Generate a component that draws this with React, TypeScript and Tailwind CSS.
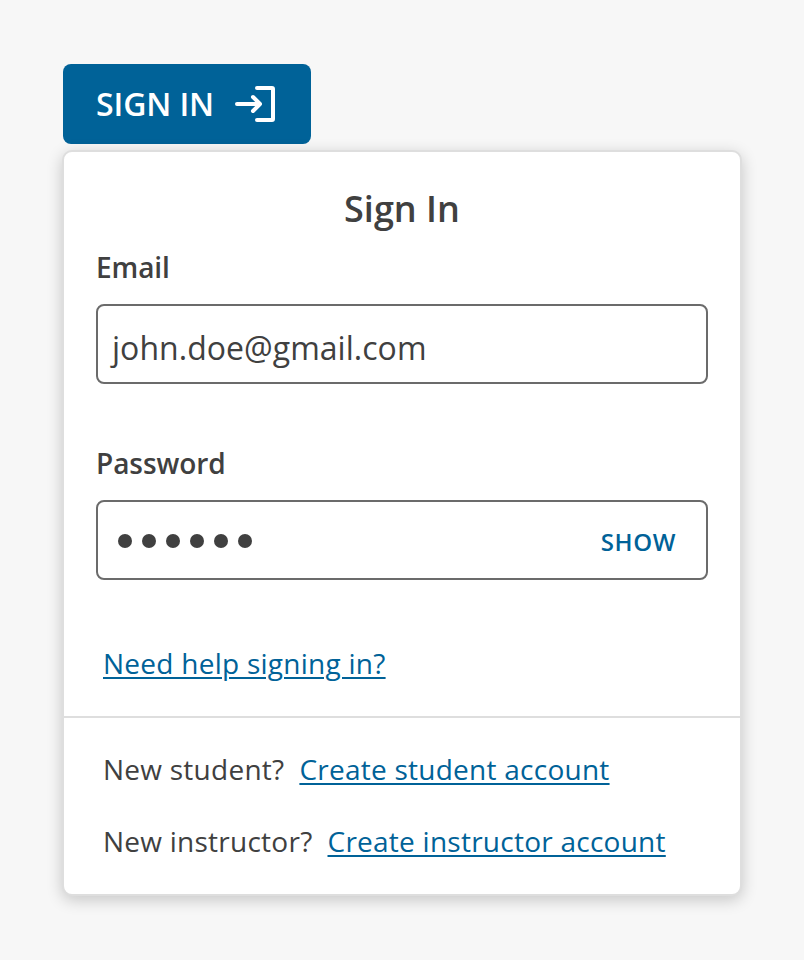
export default function App() {
  return (
    <main className="h-[960px] w-[804px] bg-[#f7f7f7] px-[62px] pt-16 font-['Open_Sans',sans-serif] text-[#404040]">
      <button className="ml-px flex h-20 w-[248px] items-center rounded-lg bg-[#006298] pl-[33px] text-[32px] font-semibold text-white">
        <span className="w-[138px] text-left tracking-[-0.1px] whitespace-nowrap">SIGN IN</span>
        <svg className="h-10 w-[42px]" viewBox="0 0 42 40" fill="none" stroke="currentColor" strokeWidth="4" strokeLinecap="round" strokeLinejoin="round">
          <path d="M23 4H38Q39 4 39 5V35Q39 36 38 36H23M3 20H26M19 13L26 20L19 27" />
        </svg>
      </button>
      <section className="mt-1.5 h-[746px] w-[680px] rounded-[10px] border-2 border-[#dedede] bg-white shadow-[0_4px_16px_rgba(0,0,0,0.2)]">
        <form className="h-[566px] border-b-2 border-[#dedede] px-8 pt-8">
          <h1 className="h-[50px] text-center text-[36px] leading-[50px] font-semibold">Sign In</h1>
          <label className="mt-[13px] block h-10 text-[28px] leading-10 font-semibold tracking-[-0.1px]">Email</label>
          <div className="mt-[17px] flex h-20 items-center rounded-lg border-2 border-[#6b6b6b] px-3.5 pt-2 text-[32px] tracking-[0.03px]">john.doe@gmail.com</div>
          <label className="mt-[59px] block h-10 text-[28px] leading-10 font-semibold tracking-[-0.05px]">Password</label>
          <div className="mt-[17px] flex h-20 items-center justify-between rounded-lg border-2 border-[#6b6b6b] pt-0.5 pr-[30px] pl-5">
            <div className="flex gap-2.5">{[0,1,2,3,4,5].map(n => <i key={n} className="size-3.5 rounded-full bg-[#404040]" />)}</div>
            <button className="pt-0.5 text-2xl font-semibold tracking-[0.6px] text-[#006298]">SHOW</button>
          </div>
          <a className="mt-[63px] ml-[7px] block text-[28px] leading-10 tracking-[0.26px] text-[#006298] underline decoration-2 underline-offset-[3px]">Need help signing in?</a>
        </form>
        <div className="pt-[31px] pl-[39px] text-[28px] leading-10 tracking-[0.25px]">
          <p>New student? <a className="ml-[7.5px] text-[#006298] underline decoration-2 underline-offset-[3px]">Create student account</a></p>
          <p className="mt-8">New instructor? <a className="ml-[7.5px] text-[#006298] underline decoration-2 underline-offset-[3px]">Create instructor account</a></p>
        </div>
      </section>
    </main>
  );
}
